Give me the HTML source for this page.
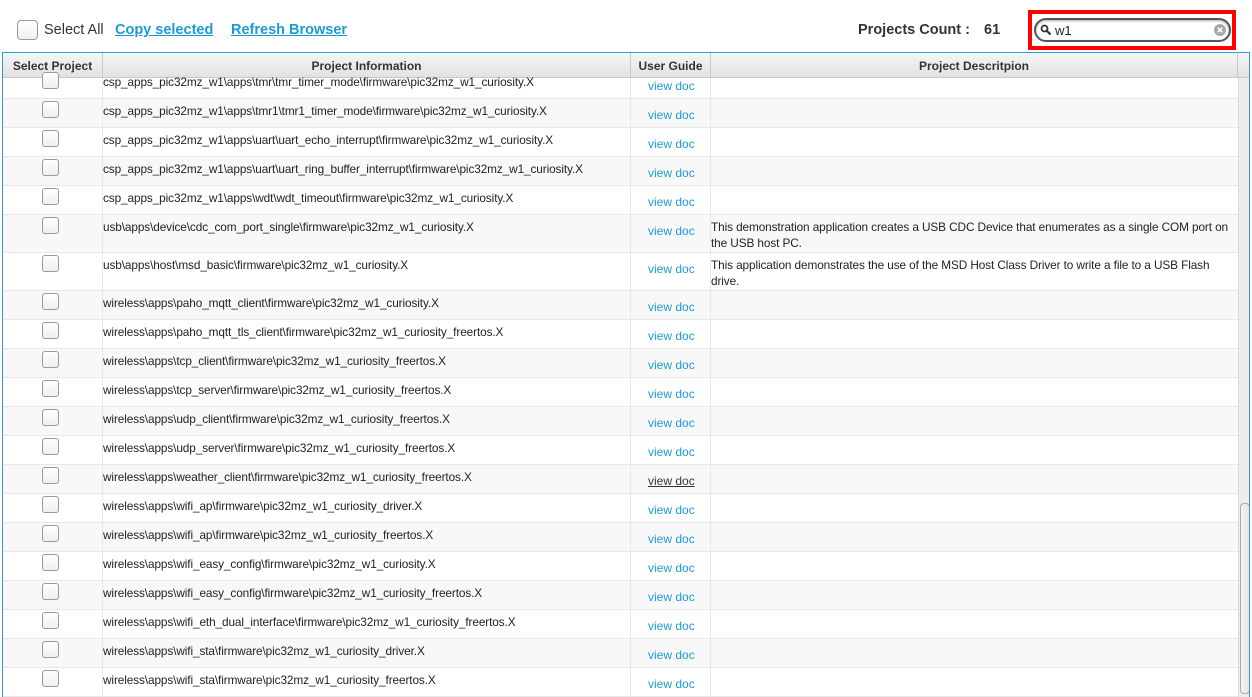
<!DOCTYPE html>
<html><head><meta charset="utf-8"><style>
*{margin:0;padding:0;box-sizing:border-box}
body{width:1252px;height:697px;overflow:hidden;background:#fff;font-family:"Liberation Sans",sans-serif;font-size:12px;color:#222;position:relative}
.a{position:absolute}
.cb{position:absolute;width:17px;height:17px;border:1px solid #9a9a9a;border-radius:3px;background:linear-gradient(#fff,#f0f0f0)}
.lnk{color:#1a9bd6;font-weight:bold;text-decoration:underline;font-size:14.5px}
.tbl{position:absolute;left:2px;top:52px;width:1248px;height:645px;border:1px solid #2a9fd6;border-bottom:none;overflow:hidden}
.hdr{position:absolute;top:0;height:25px;background:linear-gradient(#f6f6f6,#e2e2e2);border-right:1px solid #c8c8c8;border-bottom:1px solid #c8c8c8;font-weight:bold;text-align:center;line-height:26px;font-size:12px;color:#333}
.row{position:absolute;left:0;width:1235px;border-bottom:1px solid #e8e8e8}
.row.g{background:#f8f8f8}
.c{position:absolute;top:0;bottom:0;border-right:1px solid #e8e8e8}
.vd{color:#1a9bd6;position:absolute;left:645px;font-size:12px}
.p{position:absolute;left:100px;font-size:11.8px;color:#222;letter-spacing:-0.1px}
.d{position:absolute;left:708px;width:527px;line-height:16px;font-size:11.8px;letter-spacing:-0.1px;white-space:nowrap}
</style></head><body>
<div class="cb" style="left:17px;top:20px;width:21px;height:20px;border-radius:4px"></div>
<div class="a" style="left:44px;top:22px;font-size:14.5px;color:#333">Select All</div>
<div class="a lnk" style="left:115px;top:22px">Copy selected</div>
<div class="a lnk" style="left:231px;top:22px">Refresh Browser</div>
<div class="a" style="left:858px;top:22px;font-size:14.5px;font-weight:bold;color:#333">Projects Count :</div>
<div class="a" style="left:984px;top:22px;font-size:14.5px;font-weight:bold;color:#333">61</div>
<div class="a" style="left:1028px;top:10px;width:208px;height:40px;border:4px solid #f00"></div>
<div class="a" style="left:1034px;top:18px;width:197px;height:24px;border:2px solid #555;border-radius:12px;background:#fff;box-shadow:inset 0 1px 2px #aaa"></div>
<svg class="a" style="left:1040px;top:24px" width="12" height="12"><circle cx="4.5" cy="4.5" r="3" fill="none" stroke="#333" stroke-width="1.8"/><line x1="7" y1="7" x2="10.5" y2="10.5" stroke="#333" stroke-width="2.2"/></svg>
<div class="a" style="left:1055px;top:23px;font-size:13px;color:#222">w1</div>
<svg class="a" style="left:1214px;top:24px" width="12" height="12"><circle cx="6" cy="6" r="6" fill="#a8a8a8"/><path d="M3.8 3.8L8.2 8.2M8.2 3.8L3.8 8.2" stroke="#fff" stroke-width="1.6"/></svg>
<div class="tbl">
<div class="hdr" style="left:0;width:100px">Select Project</div>
<div class="hdr" style="left:100px;width:528px">Project Information</div>
<div class="hdr" style="left:628px;width:80px">User Guide</div>
<div class="hdr" style="left:708px;width:527px">Project Descritpion</div>
<div class="hdr" style="left:1235px;width:13px;border-right:none"></div>
<div id="rows"></div>
<div class="a" style="left:1235px;top:25px;width:13px;height:620px;background:#ececec;border-left:1px solid #ddd"></div>
<div class="a" style="left:1237px;top:450px;width:10px;height:191px;border:1px solid #aaa;border-radius:4px;background:linear-gradient(90deg,#f4f4f4,#e4e4e4)"></div>
</div>
<script>
var rows=[
[25,21,"csp_apps_pic32mz_w1\\apps\\tmr\\tmr_timer_mode\\firmware\\pic32mz_w1_curiosity.X",""],
[46,29,"csp_apps_pic32mz_w1\\apps\\tmr1\\tmr1_timer_mode\\firmware\\pic32mz_w1_curiosity.X",""],
[75,29,"csp_apps_pic32mz_w1\\apps\\uart\\uart_echo_interrupt\\firmware\\pic32mz_w1_curiosity.X",""],
[104,29,"csp_apps_pic32mz_w1\\apps\\uart\\uart_ring_buffer_interrupt\\firmware\\pic32mz_w1_curiosity.X",""],
[133,29,"csp_apps_pic32mz_w1\\apps\\wdt\\wdt_timeout\\firmware\\pic32mz_w1_curiosity.X",""],
[162,38,"usb\\apps\\device\\cdc_com_port_single\\firmware\\pic32mz_w1_curiosity.X","This demonstration application creates a USB CDC Device that enumerates as a single COM port on<br>the USB host PC."],
[200,38,"usb\\apps\\host\\msd_basic\\firmware\\pic32mz_w1_curiosity.X","This application demonstrates the use of the MSD Host Class Driver to write a file to a USB Flash<br>drive."]];
var t=["wireless\\apps\\paho_mqtt_client\\firmware\\pic32mz_w1_curiosity.X","wireless\\apps\\paho_mqtt_tls_client\\firmware\\pic32mz_w1_curiosity_freertos.X","wireless\\apps\\tcp_client\\firmware\\pic32mz_w1_curiosity_freertos.X","wireless\\apps\\tcp_server\\firmware\\pic32mz_w1_curiosity_freertos.X","wireless\\apps\\udp_client\\firmware\\pic32mz_w1_curiosity_freertos.X","wireless\\apps\\udp_server\\firmware\\pic32mz_w1_curiosity_freertos.X","wireless\\apps\\weather_client\\firmware\\pic32mz_w1_curiosity_freertos.X","wireless\\apps\\wifi_ap\\firmware\\pic32mz_w1_curiosity_driver.X","wireless\\apps\\wifi_ap\\firmware\\pic32mz_w1_curiosity_freertos.X","wireless\\apps\\wifi_easy_config\\firmware\\pic32mz_w1_curiosity.X","wireless\\apps\\wifi_easy_config\\firmware\\pic32mz_w1_curiosity_freertos.X","wireless\\apps\\wifi_eth_dual_interface\\firmware\\pic32mz_w1_curiosity_freertos.X","wireless\\apps\\wifi_sta\\firmware\\pic32mz_w1_curiosity_driver.X","wireless\\apps\\wifi_sta\\firmware\\pic32mz_w1_curiosity_freertos.X"];
t.forEach(function(s,i){rows.push([238+29*i,29,s,""]);});
var h="";
rows.forEach(function(r,i){
var top=r[0],ht=r[1],off=i==0?-8:0;
h+='<div class="row'+(i%2?' g':'')+'" style="top:'+top+'px;height:'+ht+'px">'+
'<div class="c" style="left:0;width:100px"></div><div class="c" style="left:100px;width:528px"></div><div class="c" style="left:628px;width:80px"></div>'+
'<div class="cb" style="left:39px;top:'+(2+off)+'px"></div>'+
'<div class="p" style="top:'+(5+off)+'px">'+r[2]+'</div>'+
'<div class="vd" style="top:'+(9+off)+'px'+(i==13?';color:#333;text-decoration:underline':'')+'">view doc</div>'+
(r[3]?'<div class="d" style="top:4px">'+r[3]+'</div>':'')+'</div>';});
document.getElementById("rows").innerHTML=h;
</script>
</body></html>
